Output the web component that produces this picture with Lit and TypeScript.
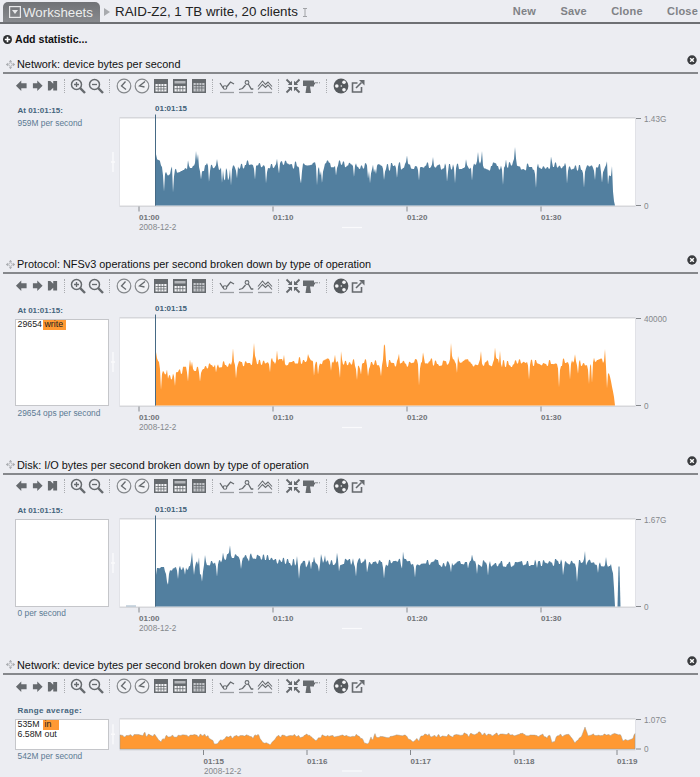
import { LitElement, html, css, svg, TemplateResult } from "lit";
import { customElement } from "lit/decorators.js";

const BLUE = "#527f9f";
const ORANGE = "#ff9933";

function rng(seed: number) {
  return () => {
    seed = (seed + 0x6d2b79f5) | 0;
    let t = Math.imul(seed ^ (seed >>> 15), 1 | seed);
    t = (t + Math.imul(t ^ (t >>> 7), 61 | t)) ^ t;
    return ((t ^ (t >>> 14)) >>> 0) / 4294967296;
  };
}

function lerp(knots: number[][], x: number) {
  if (x <= knots[0][0]) return knots[0][1];
  for (let i = 1; i < knots.length; i++) {
    if (x <= knots[i][0]) {
      const [a, b] = knots[i - 1];
      const [c, d] = knots[i];
      return b + ((d - b) * (x - a)) / (c - a);
    }
  }
  return knots[knots.length - 1][1];
}

interface Opt {
  seed: number;
  knots: number[][];
  noise: number;
  wobble: number;
  dipP: number;
  dip: number;
  spikeP: number;
  spike: number;
  side: number;
}

function series(o: Opt, x0: number, x1: number, bottom: number) {
  const r = rng(o.seed);
  const n = x1 - x0 + 1;
  const hs: number[] = [];
  let cur = 0;
  let w0 = 0;
  let w1 = (r() - 0.5) * o.wobble;
  for (let i = 0; i < n; i++) {
    if (i % 2 === 0) cur = (r() - 0.5) * o.noise;
    if (i % 9 === 0) {
      w0 = w1;
      w1 = (r() - 0.5) * o.wobble;
    }
    const wob = w0 + ((w1 - w0) * (i % 9)) / 9;
    hs.push(lerp(o.knots, x0 + i) + cur + wob);
  }
  const bump = (i: number, d: number) => {
    hs[i] += d;
    if (i > 0) hs[i - 1] += d * o.side;
    if (i < n - 1) hs[i + 1] += d * o.side;
  };
  for (let i = 0; i < n; i++) {
    const p = r();
    if (p < o.dipP) bump(i, -o.dip * (0.4 + r() * 0.6));
    else if (p < o.dipP + o.spikeP) bump(i, o.spike * (0.4 + r() * 0.6));
  }
  const pts: string[] = [`${x0},${bottom}`];
  hs.forEach((h, i) => {
    const x = x0 + i;
    const v = lerp(o.knots, x) > 0 ? Math.max(0, h) : 0;
    pts.push(`${x},${(bottom - v).toFixed(1)}`);
  });
  pts.push(`${x1},${bottom}`);
  return pts.join(" ");
}

interface Chart {
  color: string;
  plotH: number;
  svgH: number;
  max: string;
  cursor: boolean;
  ticks: [number, string][];
  dateX: number;
  start: number;
  end: number;
  opt: Opt;
  extra?: string;
  faint?: boolean;
}

interface Stat {
  title: string;
  label: string;
  wide?: boolean;
  foot: string;
  rows?: [string, string, number][];
  chart: Chart;
}

const TICKS: [number, string][] = [
  [139, "01:00"],
  [273, "01:10"],
  [407, "01:20"],
  [541, "01:30"],
];

const STATS: Stat[] = [
  {
    title: "Network: device bytes per second",
    label: "At 01:01:15:",
    foot: "959M per second",
    chart: {
      color: BLUE, plotH: 87, svgH: 135, max: "1.43G", cursor: true, ticks: TICKS, dateX: 139, start: 155, end: 615,
      opt: {
        seed: 11, noise: 8, wobble: 3, side: 0.2, dipP: 0.075, dip: 22, spikeP: 0.03, spike: 16,
        knots: [[155, 56], [157, 46], [162, 38], [168, 30], [176, 35], [190, 37], [240, 41], [300, 41], [400, 40], [500, 39], [600, 39], [607, 36], [610, 25], [612, 20], [615, 0]],
      },
    },
  },
  {
    title: "Protocol: NFSv3 operations per second broken down by type of operation",
    label: "At 01:01:15:",
    foot: "29654 ops per second",
    rows: [["29654", "write", 23]],
    chart: {
      color: ORANGE, plotH: 87, svgH: 135, max: "40000", cursor: true, ticks: TICKS, dateX: 139, start: 155, end: 615,
      opt: {
        seed: 29, noise: 8, wobble: 3, side: 0.2, dipP: 0.08, dip: 24, spikeP: 0.03, spike: 17,
        knots: [[155, 64], [157, 50], [162, 38], [168, 29], [176, 33], [190, 37], [240, 43], [300, 44], [400, 42], [500, 42], [600, 44], [607, 38], [610, 28], [612, 17], [615, 0]],
      },
    },
  },
  {
    title: "Disk: I/O bytes per second broken down by type of operation",
    label: "At 01:01:15:",
    foot: "0 per second",
    rows: [],
    chart: {
      color: BLUE, plotH: 87, svgH: 135, max: "1.67G", cursor: true, ticks: TICKS, dateX: 139, start: 155, end: 615,
      opt: {
        seed: 47, noise: 7, wobble: 3, side: 0.25, dipP: 0.07, dip: 17, spikeP: 0.03, spike: 12,
        knots: [[155, 30], [157, 38], [175, 39], [200, 40], [230, 50], [262, 50], [285, 45], [400, 44], [500, 43], [600, 44], [611, 42], [613, 30], [615, 0]],
      },
      extra: "617.5,205.5 618.5,165.5 619.5,165.5 620.5,205.5",
      faint: true,
    },
  },
  {
    title: "Network: device bytes per second broken down by direction",
    label: "Range average:",
    wide: true,
    foot: "542M per second",
    rows: [["535M", "in", 16], ["6.58M", "out", 0]],
    chart: {
      color: ORANGE, plotH: 29.5, svgH: 76, max: "1.07G", cursor: false,
      ticks: [[203.5, "01:15"], [307, "01:16"], [410.5, "01:17"], [514, "01:18"], [617, "01:19"]],
      dateX: 204, start: 120, end: 635,
      opt: {
        seed: 5, noise: 2.6, wobble: 2, side: 0.45, dipP: 0.015, dip: 4, spikeP: 0.015, spike: 3.5,
        knots: [[120, 13], [150, 15], [156, 13], [161, 7], [166, 13], [205, 14], [212, 8], [216, 6], [225, 12], [258, 14], [264, 7], [270, 5], [278, 12], [310, 14], [315, 8], [322, 13], [360, 13], [367, 4], [375, 12], [405, 14], [413, 7], [420, 13], [480, 15], [520, 14], [550, 13], [552, 6], [558, 14], [570, 13], [575, 6], [582, 14], [585, 22], [588, 14], [620, 14], [627, 9], [635, 12]],
      },
    },
  },
];

const G = "#666a6e";

const calendar = (kind: number) => svg`
  <rect x="1" y="1" width="14" height="14" fill="${G}"/>
  ${kind === 0
    ? svg`<rect x="2.5" y="6" width="11" height="7.5" fill="#f4f4f6"/><path d="M2.5 8.5h11M2.5 11h11M5.2 6v7.5M8 6v7.5M10.8 6v7.5" stroke="${G}" stroke-width=".8"/>`
    : kind === 1
    ? svg`<rect x="2.5" y="3" width="11" height="2.5" fill="#b5b7bb"/><rect x="2.5" y="8" width="11" height="5.5" fill="#f4f4f6"/><path d="M2.5 10.7h11M5.2 8v5.5M8 8v5.5M10.8 8v5.5" stroke="${G}" stroke-width=".8"/>`
    : svg`<rect x="2.5" y="5" width="11" height="8.5" fill="#c4c6ca"/><path d="M2.5 7.5h11M2.5 10h11M5.2 5v8.5M8 5v8.5M10.8 5v8.5" stroke="${G}" stroke-width=".8"/>`}
`;

const clock = (d: string) => svg`
  <circle cx="8" cy="8" r="6.8" fill="#f0f1f4" stroke="#85888c" stroke-width="1.2"/>
  <path d="${d}" fill="none" stroke="${G}" stroke-width="1.3"/>
`;

const zoom = (plus: boolean) => svg`
  <circle cx="6.5" cy="6.5" r="5" fill="none" stroke="${G}" stroke-width="1.5"/>
  <path d="M10.2 10.2L15 15" stroke="${G}" stroke-width="2.4"/>
  <path d="${plus ? "M4 6.5h5M6.5 4v5" : "M4 6.5h5"}" stroke="${G}" stroke-width="1.3"/>
`;

const under = svg`<path d="M1 14.5h14" stroke="#9a9da1" stroke-width="1.3"/>`;

const ICONS = {
  back: svg`<path d="M2 8l5.5-5.5v3H13v5H7.5v3z" fill="${G}"/>`,
  fwd: svg`<path d="M13 8L7.5 2.5v3H3v5h4.5v3z" fill="${G}"/>`,
  end: svg`<path d="M3 3h2.5l3 3V3h4v10h-4v-3l-3 3H3z" fill="${G}"/>`,
  zoomIn: zoom(true),
  zoomOut: zoom(false),
  clockA: clock("M9.5 3.5L5.5 8l4.5 3.5"),
  clockB: clock("M11 3.5L5.5 8l5 1"),
  calA: calendar(0),
  calB: calendar(1),
  calC: calendar(2),
  lineA: svg`<path d="M1 5l3.2 5M8 8.5l3.5-4.5 3.5 2" fill="none" stroke="${G}" stroke-width="1.3"/><circle cx="6" cy="9.5" r="1.8" fill="none" stroke="${G}" stroke-width="1.1"/>${under}`,
  lineB: svg`<path d="M1 11.5l3.5-1 3-3.5M10.3 6l3 5h2" fill="none" stroke="${G}" stroke-width="1.3"/><circle cx="9" cy="4.5" r="1.9" fill="none" stroke="${G}" stroke-width="1.1"/>${under}`,
  lineC: svg`<path d="M1 8.5l4.5-5.5 3 3.5L11 4l4 4.5M1 11.5l4.5-5 3 3 2.5-2.5 4 4.5" fill="none" stroke="${G}" stroke-width="1.1"/>${under}`,
  shrink: svg`<path d="M1.5 1.5l4 4M14.5 1.5l-4 4M1.5 14.5l4-4M14.5 14.5l-4-4" stroke="${G}" stroke-width="1.8"/><path d="M7 7H2.8L7 2.8zM9 7h4.2L9 2.8zM7 9H2.8L7 13.2zM9 9h4.2L9 13.2z" fill="${G}"/>`,
  drill: svg`<path d="M0 2.5h11v2h1v2h-1v2H7l1 6.5H2.5L3.5 8H0z" fill="${G}"/><path d="M12 4.8h5" stroke="#85888c" stroke-width="1" stroke-dasharray="3 1"/>`,
  wheel: svg`<circle cx="8" cy="8" r="7.4" fill="#55595d"/><circle cx="11" cy="4.3" r="1.8" fill="#f4f4f6"/><circle cx="3.8" cy="8" r="1.8" fill="#f4f4f6"/><circle cx="11" cy="11.7" r="1.8" fill="#f4f4f6"/><circle cx="8.3" cy="8" r=".8" fill="#f4f4f6"/>`,
  pop: svg`<path d="M7.5 5H2.5v9H11.5V9" fill="none" stroke="${G}" stroke-width="1.6"/><path d="M6 10L11.5 4.5" stroke="${G}" stroke-width="1.6"/><path d="M9 2h5.5v5.5z" fill="${G}"/>`,
};

@customElement("stat-toolbar")
class StatToolbar extends LitElement {
  static styles = css`
    :host { display: flex; align-items: center; height: 23px; padding-left: 14px; }
    .g { display: flex; }
    .g svg { width: 16px; height: 16px; display: block; overflow: visible; flex: none; filter: blur(.25px); }
    .g1 svg { width: 15.5px; height: 15.5px; }
    .g2 { gap: 2px; }
    .g3 { gap: 2.75px; }
    .g4 { gap: 3px; }
    .g5 { gap: 2.5px; }
    .g6 { gap: 1.5px; }
    .sep { width: 1px; height: 14px; margin: 0 5.5px; border-left: 1px dotted #aaacb0; box-sizing: border-box; }
    .sep.a { margin-left: 3.5px; margin-right: 4.5px; }
    .sep.b { margin-left: 7px; }
  `;
  icon(t: TemplateResult) {
    return html`<svg viewBox="0 0 16 16">${t}</svg>`;
  }
  render() {
    const i = ICONS;
    return html`
      <div class="g g1">${[i.back, i.fwd, i.end].map(this.icon)}</div><div class="sep a"></div>
      <div class="g g2">${[i.zoomIn, i.zoomOut].map(this.icon)}</div><div class="sep"></div>
      <div class="g g3">${[i.clockA, i.clockB, i.calA, i.calB, i.calC].map(this.icon)}</div><div class="sep"></div>
      <div class="g g4">${[i.lineA, i.lineB, i.lineC].map(this.icon)}</div><div class="sep"></div>
      <div class="g g5">${[i.shrink, i.drill].map(this.icon)}</div><div class="sep b"></div>
      <div class="g g6">${[i.wheel, i.pop].map(this.icon)}</div>
    `;
  }
}

@customElement("stat-chart")
class StatChart extends LitElement {
  static properties = { chart: { attribute: false } };
  chart!: Chart;
  static styles = css`
    :host { display: block; flex: none; }
    svg { display: block; }
    text { font-family: "Liberation Sans", Arial, sans-serif; font-size: 8.2px; fill: #85888c; }
    text.b { font-size: 8px; font-weight: 700; fill: #707377; }
    text.c { font-size: 8px; font-weight: 700; fill: #3f5f78; }
    .area { filter: blur(.25px); }
    .faint { fill: #9db4c6; }
  `;
  render() {
    const c = this.chart;
    // Drawing coordinates are those of the first section: x is page x, y starts at 100.
    const top = 118.5;
    const bottom = top + c.plotH;
    const handleY = top + c.plotH / 2;
    const poly = series(c.opt, c.start, c.end, bottom);
    return html`<svg width="590" height="${c.svgH}" viewBox="110 100 590 ${c.svgH}">
      <rect x="119.5" y="${top - 1.5}" width="516" height="${c.plotH + 3}" fill="#d6d7db"/>
      <rect x="120" y="${top}" width="515" height="${c.plotH}" fill="#fff"/>
      <g class="area">
        <polygon points="${poly}" fill="${c.color}" stroke="${c.cursor ? "none" : "#8a9296"}" stroke-width="${c.cursor ? 0 : 0.4}"/>
        ${c.extra ? svg`<polygon points="${c.extra}" fill="${c.color}"/>` : ""}
      </g>
      ${c.faint ? svg`<rect class="faint" x="126" y="${bottom - 1}" width="10" height="1"/>` : ""}
      ${c.cursor
        ? svg`<path d="M155.5 ${top - 4}V${bottom}" stroke="#466a85" stroke-width="1"/>
              <text class="c" x="155" y="111">01:01:15</text>`
        : ""}
      <path d="M113 ${handleY - 10}v20M111 ${handleY}h4" stroke="#fafafc" stroke-width="1.3"/>
      <path d="M636 ${top}h5M636 ${bottom}h5" stroke="#85888c" stroke-width="1"/>
      <text x="644" y="${top + 3}">${c.max}</text>
      <text x="644" y="${bottom + 3}">0</text>
      ${c.ticks.map(
        ([x, t]) => svg`<path d="M${x} ${bottom + 1}v5" stroke="#85888c" stroke-width="1"/>
          <text class="b" x="${x}" y="${bottom + 14.5}">${t}</text>`
      )}
      <text x="${c.dateX}" y="${bottom + 24.5}">2008-12-2</text>
      <path d="M342 ${bottom + 22}h20" stroke="#fafafc" stroke-width="1.2"/>
    </svg>`;
  }
}

@customElement("stat-section")
class StatSection extends LitElement {
  static properties = { stat: { attribute: false } };
  stat!: Stat;
  static styles = css`
    :host { display: block; height: 200.33px; }
    .head { display: flex; align-items: center; height: 16px; padding-top: 2px; margin: 0 2px 0 3px; border-bottom: 2px solid #86888c; box-sizing: content-box; font-size: 10.9px; color: #111; }
    .title { flex: 1; white-space: nowrap; }
    .move { width: 9px; height: 9px; margin: 0 2.5px; display: block; flex: none; }
    .x { width: 10px; height: 10px; display: block; margin: -8px 1.3px 0 0; flex: none; }
    .body { display: flex; margin-top: 3px; }
    .left { width: 110px; flex: none; box-sizing: border-box; padding: 5.5px 0 0 14.5px; font-size: 8.4px; color: #5b7a92; }
    .label { font-size: 8px; font-weight: 700; color: #46657d; padding-left: 3px; height: 10px; line-height: 10px; }
    .label.wide { letter-spacing: .35px; }
    .panel { width: 94.5px; box-sizing: border-box; height: 87.5px; margin-top: 3px; background: #fff; border: 1px solid #c5c6ca; border-top-width: 1.5px; padding: 0 0 0 2px; color: #222; line-height: 9.8px; font-size: 8.8px; }
    .panel.short { height: 30.5px; }
    .row { display: flex; }
    .val { width: 25px; }
    .chip { background: #ff9933; padding-left: 2px; box-sizing: border-box; }
    .nochip { padding-left: 2px; }
    .foot { padding-left: 3px; line-height: 10px; margin-top: 1.5px; }
    .foot.bare { margin-top: 2px; }
  `;
  render() {
    const s = this.stat;
    return html`
      <div class="head">
        <svg class="move" viewBox="0 0 11 11"><path d="M5.5 0l2 2.2h-4zM5.5 11l2-2.2h-4zM0 5.5l2.2-2v4zM11 5.5l-2.2-2v4z" fill="#9a9da1"/><circle cx="5.5" cy="5.5" r="2.2" fill="none" stroke="#a5a8ac"/></svg>
        <div class="title">${s.title}</div>
        <svg class="x" viewBox="0 0 11 11"><circle cx="5.5" cy="5.5" r="5.2" fill="#3a3c3f"/><path d="M3.5 3.5l4 4M7.5 3.5l-4 4" stroke="#fff" stroke-width="1.6"/></svg>
      </div>
      <stat-toolbar></stat-toolbar>
      <div class="body">
        <div class="left">
          <div class="label ${s.wide ? "wide" : ""}">${s.label}</div>
          ${s.rows
            ? html`<div class="panel ${s.chart.plotH < 50 ? "short" : ""}">
                ${s.rows.map(
                  ([v, n, w]) => html`<div class="row"><span class="val">${v}</span>${w
                    ? html`<span class="chip" style="width:${w}px">${n}</span>`
                    : html`<span class="nochip">${n}</span>`}</div>`
                )}
              </div>`
            : ""}
          <div class="foot ${s.rows ? "" : "bare"}">${s.foot}</div>
        </div>
        <stat-chart .chart=${s.chart}></stat-chart>
      </div>
    `;
  }
}

@customElement("app-root")
export class AppRoot extends LitElement {
  static styles = css`
    :host { display: block; width: 700px; height: 777px; overflow: hidden; background: #ecedf2; font-family: "Liberation Sans", Arial, sans-serif; }
    .top { display: flex; align-items: center; height: 22px; border-bottom: 2px solid #6e7074; box-sizing: content-box; }
    .tab { display: flex; align-items: center; gap: 2px; width: 97px; height: 20px; margin: 2px 0 0 3px; box-sizing: border-box; padding-left: 6px; border-radius: 5px 5px 0 0; background: linear-gradient(#707276, #888a8e); color: #eceded; font-size: 13.3px; }
    .tab svg { width: 12px; height: 12px; flex: none; }
    .crumb { width: 6px; height: 8px; margin: 1px 5px 0 4px; display: block; flex: none; }
    .name { font-size: 13.35px; color: #222; white-space: nowrap; }
    .ibeam { width: 6px; height: 9px; margin: 2px 0 0 4px; display: block; flex: none; }
    .acts { display: flex; margin-left: auto; font-size: 11px; font-weight: 700; color: #808286; letter-spacing: .2px; gap: 24.3px; padding-right: 2px; }
    .add { display: flex; align-items: center; height: 30px; font-size: 10.6px; font-weight: 700; color: #111; padding-left: 3px; gap: 3px; }
    .add svg { width: 9px; height: 9px; display: block; }
  `;
  render() {
    return html`
      <div class="top">
        <div class="tab">
          <svg viewBox="0 0 12 12"><rect x=".6" y=".6" width="10.8" height="10.8" fill="none" stroke="#e8e8ea" stroke-width="1.2"/><path d="M3 4h6L6 8z" fill="#e8e8ea"/></svg>
          Worksheets
        </div>
        <svg class="crumb" viewBox="0 0 6 8"><path d="M0 0l6 4-6 4z" fill="#a8aaae"/></svg>
        <div class="name">RAID-Z2, 1 TB write, 20 clients</div>
        <svg class="ibeam" viewBox="0 0 6 9"><path d="M1 .5h4M1 8.5h4M3 .5v8" stroke="#a0a2a6" fill="none"/></svg>
        <div class="acts"><span>New</span><span>Save</span><span>Clone</span><span>Close</span></div>
      </div>
      <div class="add">
        <svg viewBox="0 0 10 10"><circle cx="5" cy="5" r="5" fill="#2c2e30"/><path d="M5 2v6M2 5h6" stroke="#fff" stroke-width="1.8"/></svg>
        Add statistic...
      </div>
      ${STATS.map((s) => html`<stat-section .stat=${s}></stat-section>`)}
    `;
  }
}
